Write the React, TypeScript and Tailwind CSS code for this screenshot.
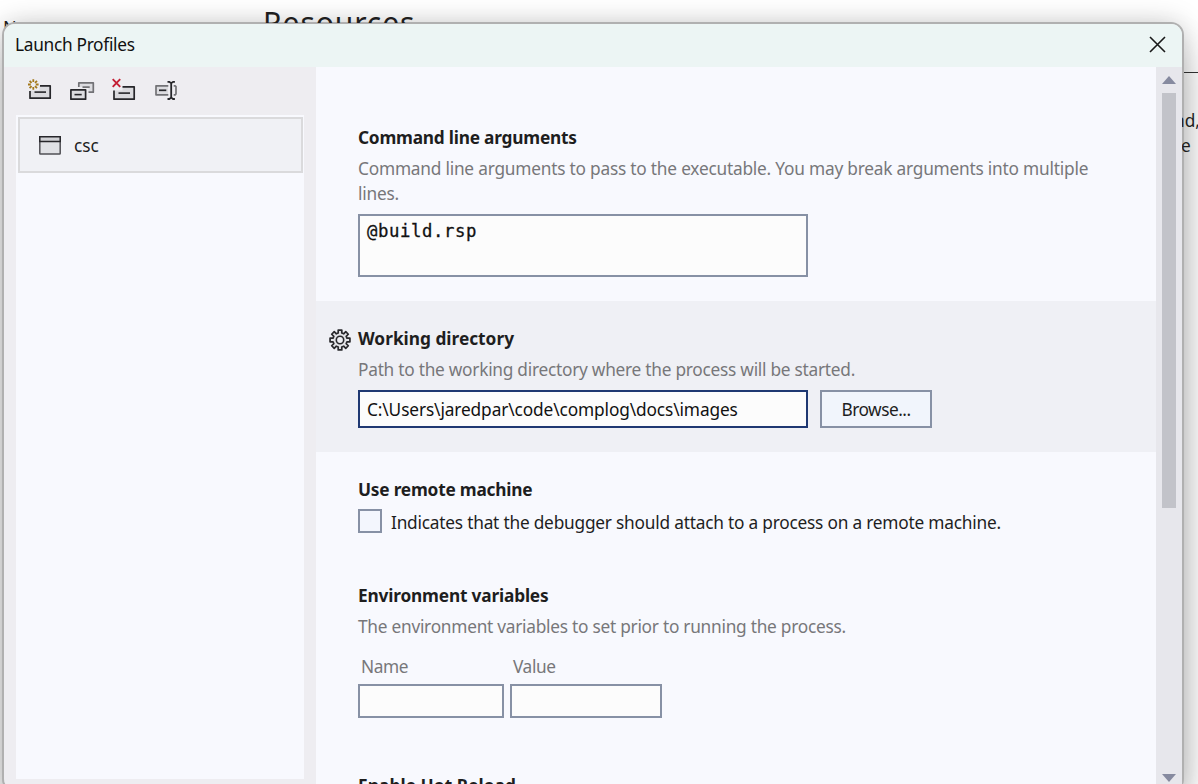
import type { ReactNode } from "react";

function NewProfileIcon() {
  return (
    <svg width="24" height="24" viewBox="0 0 24 24" fill="none">
      <path d="M11.5 7.8H22.2V20.2H2V12.5L11.5 12.5Z" fill="#dadade" />
      <path d="M12 7.8H22.2V20.2H2V13" stroke="#26262a" strokeWidth="1.7" strokeLinejoin="round" />
      <path d="M6.5 14.1H18" stroke="#26262a" strokeWidth="1.6" />
      <path d="M5.3 1.3V4M5.3 9V11.8M0 6.5H2.8M7.8 6.5H10.6M1.6 2.8L3.6 4.8M7 8.2L9 10.2M9 2.8L7 4.8M3.6 8.2L1.6 10.2" stroke="#a3781a" strokeWidth="1.8" />
    </svg>
  );
}

function CopyProfileIcon() {
  return (
    <svg width="26" height="24" viewBox="0 0 26 24" fill="none">
      <path d="M8.8 9V4.8H23.3V14.2H18.5V9Z" fill="#dcdce0" />
      <path d="M8.8 9V4.8H23.3V14.2H18.5M12.5 9.1H19.7" stroke="#727276" strokeWidth="1.7" strokeLinejoin="round" />
      <path d="M.9 11.8H15.6V21.2H.9Z" fill="#dcdce0" stroke="#26262a" strokeWidth="1.7" strokeLinejoin="round" />
      <path d="M4.5 16.6H11.7" stroke="#26262a" strokeWidth="1.6" />
    </svg>
  );
}

function DeleteProfileIcon() {
  return (
    <svg width="24" height="24" viewBox="0 0 24 24" fill="none">
      <path d="M10.5 8.8H22.2V21.2H2V12.5H10.5Z" fill="#dadade" />
      <path d="M10.5 8.8H22.2V21.2H2V12.5" stroke="#26262a" strokeWidth="1.7" strokeLinejoin="round" />
      <path d="M6.5 15.1H18" stroke="#26262a" strokeWidth="1.6" />
      <path d="M.7 1.2L8.2 8.8M8.2 1.2L.7 8.8" stroke="#c41e34" strokeWidth="1.9" />
    </svg>
  );
}

function RenameProfileIcon() {
  return (
    <svg width="24" height="24" viewBox="0 0 24 24" fill="none">
      <path d="M1 7.8H13V16.8H1Z" fill="#dcdce0" />
      <path d="M13.3 7.8H1V16.8H13.3M18.7 7.8H20.2L21 8.6V16L20.2 16.8H18.7" stroke="#727276" strokeWidth="1.7" strokeLinejoin="round" />
      <path d="M4 12.3H11.3" stroke="#26262a" strokeWidth="1.7" />
      <path d="M12.5 3.8H14.3L16.2 5.2L18.1 3.8H19.9M16.2 5V20M12.5 21H14.3L16.2 19.6L18.1 21H19.9" stroke="#26262a" strokeWidth="1.8" />
    </svg>
  );
}

function WindowIcon() {
  return (
    <svg width="22" height="19" viewBox="0 0 22 19" fill="none">
      <rect x=".8" y=".8" width="20.4" height="17.2" rx=".6" fill="#e0e1e5" stroke="#505055" strokeWidth="1.5" />
      <path d="M.8 5.6V.8H21.2V5.6Z" fill="#d0d1d5" stroke="#26262a" strokeWidth="1.5" />
    </svg>
  );
}

function GearIcon() {
  const teeth = 8;
  const points: string[] = [];
  for (let i = 0; i < teeth; i++) {
    const mid = (i * 2 * Math.PI) / teeth;
    const corners: [number, number][] = [
      [-0.25, 7.2],
      [-0.18, 10.1],
      [0.18, 10.1],
      [0.25, 7.2],
    ];
    for (const [offset, radius] of corners) {
      points.push(`${11 + radius * Math.sin(mid + offset)},${11 - radius * Math.cos(mid + offset)}`);
    }
  }
  return (
    <svg width="22" height="22" viewBox="0 0 22 22" fill="none">
      <polygon points={points.join(" ")} fill="#e3e4e8" stroke="#29292d" strokeWidth="1.7" strokeLinejoin="round" />
      <circle cx="11" cy="11" r="3.7" fill="#eff0f5" stroke="#29292d" strokeWidth="1.6" />
    </svg>
  );
}

function Heading({ children, className = "tracking-[-0.22px]" }: { children: ReactNode; className?: string }) {
  return <h2 className={`h-[25px] whitespace-nowrap text-[17.3px] leading-[25px] font-bold text-[#1e1e1e] ${className}`}>{children}</h2>;
}

function Note({ children, className = "tracking-[-0.24px]" }: { children: ReactNode; className?: string }) {
  return <p className={`mt-[6px] whitespace-nowrap text-[17.3px] leading-[25px] text-[#77777a] ${className}`}>{children}</p>;
}

export default function App() {
  return (
    <div className="relative h-[784px] w-full overflow-hidden bg-white font-['Noto_Sans',sans-serif]">
      <div className="absolute top-[2px] left-[263px] z-10 h-[21px] overflow-hidden text-[30px] leading-[42px] tracking-[0.9px] whitespace-nowrap text-[#1e1e1e]">Resources</div>
      <div className="absolute top-[15px] left-[3px] text-[18px] leading-[24px] text-[#1e1e1e]">N</div>
      <div className="absolute top-[72px] left-[1170px] h-px w-[28px] bg-[#333]" />

      <div className="absolute top-[24px] left-[4px] flex h-[766px] w-[1178px] flex-col rounded-[11px] bg-[#eeedf1] shadow-[0_0_0_2px_#b0b0b0,0_0_28px_rgba(0,0,0,0.22),0_26px_40px_rgba(0,0,0,0.24)]">
        <header className="flex h-[43px] shrink-0 items-center justify-between rounded-t-[11px] bg-[#ecf5f4] pr-[16px] pb-[2px] pl-[11px]">
          <h1 className="text-[17.3px] leading-[24px] tracking-[-0.3px] text-[#111]">Launch Profiles</h1>
          <svg width="17" height="17" viewBox="0 0 17 17">
            <path d="M1 1L16 16M16 1L1 16" stroke="#191919" strokeWidth="1.6" />
          </svg>
        </header>
        <div className="flex min-h-0 flex-1">
          <aside className="flex w-[312px] shrink-0 flex-col px-3 pb-[11px]">
            <div className="flex h-[48px] shrink-0 pt-[11px] pl-[12px]">
              <div className="w-[42px]"><NewProfileIcon /></div>
              <div className="w-[42px]"><CopyProfileIcon /></div>
              <div className="w-[43px]"><DeleteProfileIcon /></div>
              <RenameProfileIcon />
            </div>
            <div className="flex-1 bg-[#f8f9fe] pt-[2px] pr-[1px] pl-[2px]">
              <div className="flex h-[56px] items-center border-2 border-[#dadadc] bg-[#f0f1f5] pl-[19px]">
                <WindowIcon />
                <span className="mt-[2px] ml-[13px] text-[17.3px] leading-[24px] text-[#1e1e1e]">csc</span>
              </div>
            </div>
          </aside>
          <main className="h-[717px] w-[840px] shrink-0 overflow-hidden bg-[#f8f9fe]">
            <section className="h-[234px] pt-[58px] pl-[42px]">
              <Heading>Command line arguments</Heading>
              <Note className="tracking-[-0.22px]">Command line arguments to pass to the executable. You may break arguments into multiple<br />lines.</Note>
              <div className="mt-[8px] h-[63px] w-[450px] border-2 border-[#8791a5] bg-[#fcfcfc] pt-[3px] pl-[7px] font-['DejaVu_Sans_Mono',monospace] text-[17.3px] leading-[24px] tracking-[0.6px] text-[#111] [-webkit-text-stroke:0.3px_#111]">@build.rsp</div>
            </section>
            <section className="h-[151px] bg-[#eff0f5] pt-[25px]">
              <div className="flex h-[25px] pl-[13px]">
                <div className="w-[29px] pt-[3px]"><GearIcon /></div>
                <Heading className="tracking-normal">Working directory</Heading>
              </div>
              <div className="pl-[42px]">
                <Note className="tracking-[-0.26px]">Path to the working directory where the process will be started.</Note>
                <div className="mt-[8px] flex gap-3">
                  <div className="h-[38px] w-[450px] border-2 border-[#1f3872] bg-[#fcfcfc] pt-[5px] pl-[7px] text-[17.3px] leading-[25px] tracking-[-0.12px] text-[#111]">C:\Users\jaredpar\code\complog\docs\images</div>
                  <div className="flex h-[38px] w-[112px] items-center justify-center border-2 border-[#8791a5] bg-[#f1f5fc] pt-[1px] text-[17.3px] tracking-[-0.5px] text-[#1e1e1e]">Browse...</div>
                </div>
              </div>
            </section>
            <section className="h-[106px] pt-[25px] pl-[42px]">
              <Heading>Use remote machine</Heading>
              <div className="mt-[7px] flex">
                <div className="size-[24px] border-2 border-[#8791a5] bg-[#f3f6fd]" />
                <span className="mt-[1px] ml-[9px] text-[17.3px] leading-[25px] tracking-[-0.22px] whitespace-nowrap text-[#1e1e1e]">Indicates that the debugger should attach to a process on a remote machine.</span>
              </div>
            </section>
            <section className="h-[189px] pt-[25px] pl-[42px]">
              <Heading className="tracking-[-0.18px]">Environment variables</Heading>
              <Note className="tracking-[-0.26px]">The environment variables to set prior to running the process.</Note>
              <div className="mt-[15px] flex gap-[6px] text-[17.3px] leading-[25px] tracking-[-0.4px] text-[#77777a]">
                <div className="w-[146px]">
                  <div className="pl-[3px]">Name</div>
                  <div className="mt-[5px] h-[34px] border-2 border-[#8791a5] bg-[#fcfcfc]" />
                </div>
                <div className="w-[152px]">
                  <div className="pl-[3px]">Value</div>
                  <div className="mt-[5px] h-[34px] border-2 border-[#8791a5] bg-[#fcfcfc]" />
                </div>
              </div>
            </section>
            <section className="pt-[26px] pl-[42px]">
              <Heading className="tracking-[0.06px]">Enable Hot Reload</Heading>
            </section>
          </main>
          <div className="flex h-[717px] w-[26px] flex-col items-center bg-[#e7e7ec] pt-[9px] pb-[2px]">
            <svg width="14" height="8" viewBox="0 0 14 8"><path d="M7 0L14 8H0Z" fill="#868a9f" /></svg>
            <div className="mt-[9px] h-[415px] w-[14px] bg-[#c2c3c9]" />
            <svg width="14" height="8" viewBox="0 0 14 8" className="mt-auto"><path d="M7 8L14 0H0Z" fill="#868a9f" /></svg>
          </div>
        </div>
      </div>
      <div className="absolute top-[108px] left-[1182px] w-[16px] overflow-hidden text-[17.3px] leading-[25px] text-[#1e1e1e]">
        <div className="ml-[-8px] whitespace-nowrap">nd,</div>
        <div className="ml-[-1px]">e</div>
      </div>
    </div>
  );
}
